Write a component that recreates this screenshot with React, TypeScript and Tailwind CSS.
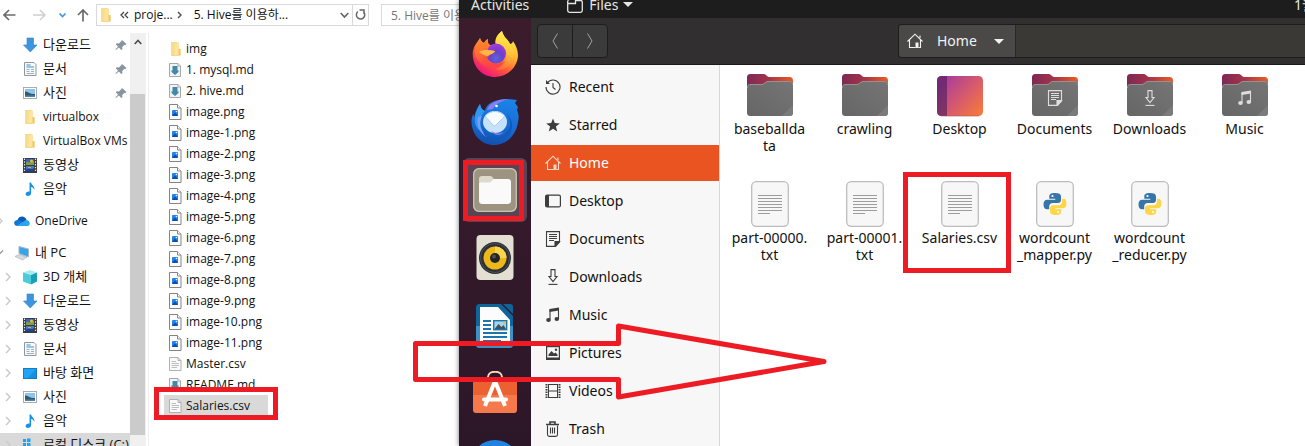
import React from "react";

/* ---------- Explorer icons ---------- */

function WinFolder() {
  return (
    <svg width="16" height="16" viewBox="0 0 16 16">
      <path d="M3 1h6l1.500 1.500V15H4L3 14z" fill="#f3cf73" />
      <path d="M3 1h4v13.500L3 14z" fill="#f9dd8e" />
      <path d="M7 1.500h4V8h1.500v6.500H6.500z" fill="#fbe3a0" />
      <path d="M10.500 8h2v6.500h-2z" fill="#eec763" />
    </svg>
  );
}

function DownArrow() {
  return (
    <svg width="16" height="16" viewBox="0 0 16 16">
      <path d="M5 1h6.500v7H15l-6.700 7L1.500 8H5z" fill="#3f93df" stroke="#2b7fcc" strokeWidth=".6" />
    </svg>
  );
}

function DocIcon() {
  return (
    <svg width="16" height="16" viewBox="0 0 16 16">
      <path d="M2.500 1.500h9.500l2 2v11H2.500z" fill="#f7f9fa" stroke="#8d979d" />
      <path d="M4.500 4h4M4.500 6h7.500" stroke="#3f8fd0" strokeWidth="1.200" />
      <path d="M4.500 8.500h3M4.500 10.500h3M4.500 12.500h7.500M9 8.500h3M9 10.500h3" stroke="#9bb2c2" />
    </svg>
  );
}

function PhotoIcon() {
  return (
    <svg width="16" height="16" viewBox="0 0 16 16">
      <rect x="1.500" y="2.500" width="13" height="11" fill="#fff" stroke="#a9adb1" />
      <rect x="3" y="4" width="10" height="8" fill="#8ec5ee" />
      <path d="M3 6.500c3 0 5 3 10 2.500v3H3z" fill="#33586a" />
      <path d="M3 10.500h10V12H3z" fill="#4f86a8" />
    </svg>
  );
}

function FilmIcon() {
  return (
    <svg width="16" height="16" viewBox="0 0 16 16">
      <rect x="1" y="1" width="14" height="15" fill="#3a3a3c" />
      <path d="M2.500 1.500v14M13.500 1.500v14" stroke="#e9e9e9" strokeWidth="1.200" strokeDasharray="1.400 1.400" />
      <rect x="4" y="2" width="8" height="6" fill="#3f62c4" />
      <path d="M4 6c2-3 3 1 5-1l3-1v4H4z" fill="#79a63e" />
      <circle cx="9.500" cy="4" r="1.500" fill="#e7b63c" />
      <rect x="4" y="9" width="8" height="6" fill="#3d77d0" />
      <path d="M4 13c3-3 5 1 8-2v4H4z" fill="#283f7d" />
      <path d="M6 10.500h3" stroke="#e4a047" />
    </svg>
  );
}

function NoteIcon() {
  return (
    <svg width="16" height="16" viewBox="0 0 16 16">
      <path d="M7.500 1.500h1.600c.3 2.500 4 3.400 3.200 7.500-.6-1.800-1.600-2.700-3.200-3V12c0 1.700-1.400 3-3.100 3-1.400 0-2.400-.8-2.400-2 0-1.500 1.600-2.700 3.900-2.500z" fill="#1693e6" />
    </svg>
  );
}

function CloudIcon() {
  return (
    <svg width="16" height="16" viewBox="0 0 16 16">
      <path d="M3.500 7C5 2 11.500 2.500 12.500 7L9 11z" fill="#0a5cb4" />
      <path d="M4 13c-5 0-5-6-.5-6 2-.5 3.500.5 8 4z" fill="#1078d2" />
      <path d="M3 12.500 12 7c4.500 0 5 6 1 6H4z" fill="#2ba5ee" />
    </svg>
  );
}

function PcIcon() {
  return (
    <svg width="16" height="16" viewBox="0 0 16 16">
      <path d="m5 1.500 9.500 2.500v8L5 8.500z" fill="#36a4ea" stroke="#a9b7c1" />
      <path d="m1 11.500 4-2 8 2.500-4.500 3z" fill="#d5dade" stroke="#a8afb5" strokeWidth=".6" />
    </svg>
  );
}

function CubeIcon() {
  return (
    <svg width="16" height="16" viewBox="0 0 16 16">
      <path d="m8 1 7 2.500L9 6 1 3.500z" fill="#a7ecf1" />
      <path d="M1 3.500 9 6v9.500l-8-3z" fill="#4ccbd9" />
      <path d="m9 6 6-2.500v9l-6 3z" fill="#17a0b6" />
    </svg>
  );
}

function DesktopTile() {
  return (
    <svg width="16" height="16" viewBox="0 0 16 16">
      <rect x="1.500" y="3.500" width="13" height="10" fill="#22a4f4" stroke="#167bc4" />
      <path d="M14 4v9H6z" fill="#1390e2" />
    </svg>
  );
}

function DriveIcon() {
  return (
    <svg width="16" height="16" viewBox="0 0 16 16">
      <path d="M1 2h3v3H1zM5 1.500h3.500V5H5zM1 6h3v3H1zM5 6h3.500v3.500H5z" fill="#1fa6ea" />
      <path d="M3 10h12v4H3z" fill="#b9bec2" />
    </svg>
  );
}

function PinIcon() {
  return (
    <svg width="12" height="12" viewBox="0 0 12 12" aria-hidden="true">
      <path d="M7 1 11.500 5 10 6.200 9.200 6 7.200 8l.2 2.200-1 .8-2.700-2.600L1 11l-.5-.5L3 7.600.8 5.200l.9-.9 2.200.2L6 2.600z" fill="#8794a3" />
    </svg>
  );
}

function MdFile() {
  return (
    <svg width="14" height="16" viewBox="0 0 14 16">
      <path d="M1.500 1.500h8.500l2.500 2.500v10.500h-11z" fill="#f1f4f6" stroke="#a4a8ab" />
      <path d="M10 1.500v2.500h2.500" fill="#fff" stroke="#a4a8ab" />
      <path d="M4.500 4h5v4.500h1.500l-1 2-3 2.500-3-2.500-1-2h1.500z" fill="#4189a6" />
    </svg>
  );
}

function PngFile() {
  return (
    <svg width="14" height="16" viewBox="0 0 14 16">
      <path d="M1.500.5H9.500l3.500 3.500v11.500H1.500z" fill="#fbfbfb" stroke="#858585" />
      <path d="M9.500.5V4H13" fill="#fff" stroke="#858585" />
      <rect x="4" y="6" width="6" height="6" rx="1" fill="#2383e6" />
      <path d="m4 11.500 3-3L10 11.500l-.5.5h-5z" fill="#0b50b0" />
      <circle cx="8.500" cy="7.500" r=".8" fill="#e7f3ff" />
    </svg>
  );
}

function CsvFile() {
  return (
    <svg width="14" height="16" viewBox="0 0 14 16">
      <path d="M1.500 1.500H10l3 3v10H1.500z" fill="#fafafa" stroke="#b0b0b0" />
      <path d="M10 1.500v3h3" fill="none" stroke="#b0b0b0" />
      <path d="M3.500 5.500H8M3.500 7.500H11M3.500 9.500H11M3.500 11.500H9" stroke="#bdbdbd" />
    </svg>
  );
}

function Chevron({ open = false }: { open?: boolean }) {
  return (
    <svg width="8" height="10" viewBox="0 0 8 10" aria-hidden="true">
      {open ? (
        <path d="M0 5.500 2 7.500 7 2.500" fill="none" stroke="#9a9a9a" strokeWidth="1.300" />
      ) : (
        <path d="m2 1 4 4-4 4" fill="none" stroke="#cbcbcb" strokeWidth="1.500" />
      )}
    </svg>
  );
}

/* ---------- Dock icons ---------- */

function Firefox() {
  return (
    <svg width="46" height="46" viewBox="0 0 46 46">
      <defs>
        <linearGradient id="ffBody" x1=".8" y1=".1" x2=".25" y2=".95">
          <stop offset="0" stopColor="#ffe94b" />
          <stop offset=".35" stopColor="#ffb02e" />
          <stop offset=".65" stopColor="#ff5b36" />
          <stop offset="1" stopColor="#f0157e" />
        </linearGradient>
        <radialGradient id="ffGlobe" cx=".5" cy=".75" r=".7">
          <stop offset="0" stopColor="#5b63d8" />
          <stop offset=".5" stopColor="#6b3fcb" />
          <stop offset="1" stopColor="#a03bdc" />
        </radialGradient>
        <linearGradient id="ffHead" x1="0" y1="0" x2=".3" y2="1">
          <stop offset="0" stopColor="#ff8d2a" />
          <stop offset=".5" stopColor="#ff7030" />
          <stop offset="1" stopColor="#ff4048" />
        </linearGradient>
        <linearGradient id="ffFlame" x1=".5" y1="0" x2=".4" y2="1">
          <stop offset="0" stopColor="#fff04e" />
          <stop offset=".55" stopColor="#ffc53a" />
          <stop offset="1" stopColor="#ff6a3c" />
        </linearGradient>
      </defs>
      <path d="M8 7c1 3 2 4 4 5 1-2 2-3 4-4-.5 3 0 5 2 6l6 0C22 10 24 4 30 0c1 6 6 8 8 13 1 0 3-1 3-3 4 6 5 11 5 15-1 12-11 21-23 21S1 37 .7 23C.7 18 3 14 4 13c1-2 3-4 4-6z" fill="url(#ffBody)" />
      <path d="M30 0c-5 4-7 8-6 13 7 1 11 5 11 11 0 8-5 13-12 14 10 3 19-4 19-14 0-5-2-8-4-11-2-5-7-7-8-13z" fill="url(#ffFlame)" />
      <circle cx="24" cy="22.500" r="10" fill="url(#ffGlobe)" />
      <path d="M8 7c1 3 2 4 4 5 1-2 2-3 4-4-.5 3 0 5 2 6-1 1-2 3-2 5l7 1c-1 3-5 3-6 5-2 2-3 1-4 2 1 4 5 6 10 6 4 0 7-1 9-3-2 7-14 10-22 3C4 28 2 24 3 18c0-5 4-8 5-11z" fill="url(#ffHead)" fillOpacity=".9" />
      <path d="M7 21c4-3 10-2 16-1-1 3-5 3-7 5-3 0-6-2-9-4z" fill="#ffb648" />
    </svg>
  );
}

function Thunderbird() {
  return (
    <svg width="48" height="48" viewBox="0 0 48 48">
      <defs>
        <linearGradient id="tbBody" x1=".6" y1="0" x2=".4" y2="1">
          <stop offset="0" stopColor="#1b83e8" />
          <stop offset=".6" stopColor="#1769d0" />
          <stop offset="1" stopColor="#1150ae" />
        </linearGradient>
      </defs>
      <path d="M9 6c1 4 2 6 5 7 1-8 11-12 23-12l9 1-2 3 3 4-1 3c2 5 2 8 1 12-2 14-12 23-24 23C10 47 0 36 .5 22c.3-3 1-4 2-6 0 0 .5 2 1 3C4 14 6 10 9 6z" fill="url(#tbBody)" />
      <path d="M9 6c1 4 2 6 5 7-5 5-7 14-1 22C5 32 3 25 4 18c1-5 3-8 5-12z" fill="#2c9af2" />
      <path d="M16 12c2-7 11-11 21-11-8 3-13 5-15 10z" fill="#8a7df0" />
      <path d="M7 19c-2 7 1 15 8 20-7-9-7-14-4-21z" fill="#7e9cf3" />
      <path d="M36 16c5 8 4 16-3 21-6 4-11 2-15 0 3 5 11 6 17 2 8-5 8-16 1-23z" fill="#0f5abb" />
      <ellipse cx="24" cy="24" rx="12" ry="11" fill="#c5e1fc" />
      <path d="M14 18c6-6 14-6 20 0l-9 9c-1 1-2 1-3 0z" fill="#f6fbff" stroke="#9dc5ee" strokeWidth=".8" />
      <path d="M20 33c5 3 9 3 13 1-4 4-9 4-13-1z" fill="#8e7cea" />
      <circle cx="25.500" cy="8" r="1.300" fill="#fff" />
    </svg>
  );
}

function FilesApp() {
  return (
    <svg width="46" height="46" viewBox="0 0 46 46">
      <rect x="1" y="1" width="44" height="44" rx="6" fill="#9c9480" />
      <rect x="1.700" y="1.700" width="42.600" height="42.600" rx="5.500" fill="none" stroke="#c9c3b1" strokeWidth="1.300" />
      <path d="M7 12c0-2 1-3 3-3h8c2 0 2 1 4 3v6H7z" fill="#dedacb" />
      <path d="M7 17c0-1 1-1.500 2-1.500h9l4-3.500h14c2 0 3 1 3 3v18c0 3-1 4-4 4H11c-3 0-4-1-4-4z" fill="#fafafa" />
    </svg>
  );
}

function Rhythmbox() {
  return (
    <svg width="46" height="46" viewBox="0 0 46 46">
      <rect x="4.500" y="0" width="37" height="45" rx="4" fill="#e4dfd3" />
      <circle cx="23" cy="23" r="16" fill="#2c2f36" />
      <circle cx="23" cy="23" r="14.500" fill="none" stroke="#4c5059" />
      <circle cx="23" cy="23" r="11.500" fill="#edb81a" />
      <path d="M23 11.500a11.500 11.500 0 0 1 11.500 11.500L23 23z" fill="#f9d34b" />
      <circle cx="23" cy="23" r="5" fill="#22242a" />
      <circle cx="22" cy="21.500" r="2" fill="#4c4e55" />
    </svg>
  );
}

function Writer() {
  return (
    <svg width="46" height="46" viewBox="0 0 46 46">
      <path d="M8 1h21l12 12v28c0 3-1 4-4 4H8c-3 0-4-1-4-4V5c0-3 1-4 4-4z" fill="#0e6599" />
      <path d="M4 23h37v18c0 3-1 4-4 4H8c-3 0-4-1-4-4z" fill="#3d8fc4" />
      <path d="M31 1h7c2 0 3 1 3 3v7z" fill="#0e6599" />
      <path d="M8 4h18l12 13v25H8z" fill="#fcfcfc" />
      <path d="M11 18h8M11 22h8M11 26h8M11 30h24M11 34h24M11 38h18" stroke="#1d76ab" strokeWidth="2" />
      <rect x="21.700" y="17.700" width="13" height="9" fill="#a7d4f0" stroke="#1d76ab" strokeWidth="1.400" />
      <path d="m22.500 26 4-5 3 3 2-2 2.500 4z" fill="#43535d" />
      <circle cx="32.500" cy="20" r="1.500" fill="#f2bb3b" />
    </svg>
  );
}

function Software() {
  return (
    <svg width="46" height="46" viewBox="0 0 46 46">
      <path d="M16 8V6c0-7 14-7 14 0v2" fill="none" stroke="#f6d8be" strokeWidth="2" />
      <rect x="1" y="6" width="44" height="36" rx="4" fill="#ec6130" />
      <path d="M1 24h44v14c0 3-1 4-4 4H5c-3 0-4-1-4-4z" fill="#f5794b" />
      <path d="M23 10 13 35M23 10l10 25" stroke="#fff" strokeWidth="4" />
      <path d="M12 28.500h22" stroke="#fff" strokeWidth="4" strokeLinecap="round" />
    </svg>
  );
}

function Help() {
  return (
    <svg width="50" height="50" viewBox="0 0 50 50">
      <circle cx="25" cy="27" r="24" fill="#2183dd" />
      <path d="M25 14c5 0 9 3 9 8 0 6-7 6-7 11" fill="none" stroke="#fff" strokeWidth="4" />
    </svg>
  );
}

/* ---------- Symbolic icons, drawn in the current colour ---------- */

function Clock() {
  return (
    <svg width="16" height="16" viewBox="0 0 16 16" fill="none" stroke="currentColor" strokeWidth="1.100">
      <path d="M2.300 4A7 7 0 1 1 1 8" />
      <path d="M8 4v4.500l2.500 2" />
      <path d="M1 1v4h4z" fill="currentColor" stroke="none" />
    </svg>
  );
}

function Star() {
  return (
    <svg width="16" height="16" viewBox="0 0 16 16">
      <path d="m8 1.500 1.800 4.600 5 .3-3.900 3.100 1.300 4.900L8 11.700l-4.200 2.700 1.300-4.900-3.900-3.100 5-.3z" fill="currentColor" />
    </svg>
  );
}

function House() {
  return (
    <svg width="16" height="16" viewBox="0 0 16 16" fill="none" stroke="currentColor" strokeWidth="1.100">
      <path d="M.5 8.500 8 1.200l7.500 7.300" />
      <path d="M2.500 7v7.500h6M13.500 7v7.500h-2M13 5V2.500" />
      <path d="M8.500 15V9.500h3V15z" fill="currentColor" stroke="none" />
    </svg>
  );
}

function DeskIcon() {
  return (
    <svg width="16" height="16" viewBox="0 0 16 16">
      <rect x=".6" y="2.100" width="14.800" height="11.800" rx="1.500" fill="none" stroke="currentColor" strokeWidth="1.200" />
      <path d="M1 2h3v12H1z" fill="currentColor" />
    </svg>
  );
}

function Page() {
  return (
    <svg width="16" height="16" viewBox="0 0 16 16" fill="none" stroke="currentColor" strokeWidth="1.100">
      <path d="M1.500.6h13v10.400l-4 4.400h-9z" />
      <path d="M4 3.500h8M4 5.500h8M4 7.500h8M4 9.500h5" />
      <path d="M14.500 10.500h-4.500v5z" fill="currentColor" />
    </svg>
  );
}

function Download() {
  return (
    <svg width="16" height="16" viewBox="0 0 16 16" fill="none" stroke="currentColor" strokeWidth="1.100">
      <path d="M6 .6h4V7.500h2L8 12.500 4 7.500h2z" />
      <path d="M3.500 15.400h9" />
    </svg>
  );
}

function Notes() {
  return (
    <svg width="16" height="16" viewBox="0 0 16 16">
      <path d="M5 2.500v10M13.500 1v11" stroke="currentColor" strokeWidth="1.100" />
      <path d="M4.500 2 14 .5v3L4.500 5z" fill="currentColor" />
      <ellipse cx="3.500" cy="13" rx="2.300" ry="2" fill="currentColor" />
      <ellipse cx="11.800" cy="12" rx="2.300" ry="2" fill="currentColor" />
    </svg>
  );
}

function Picture() {
  return (
    <svg width="16" height="16" viewBox="0 0 16 16">
      <rect x="1.600" y="1.600" width="12.800" height="12.800" fill="none" stroke="currentColor" strokeWidth="1.200" />
      <path d="M1.500 12.500h13v2h-13zM3.500 11V9.500L6.500 6l2.500 2.500L10.500 7.500 12.500 9.500V11z" fill="currentColor" />
      <circle cx="11" cy="4.700" r="1.200" fill="currentColor" />
    </svg>
  );
}

function Film() {
  return (
    <svg width="16" height="16" viewBox="0 0 16 16" fill="none" stroke="currentColor">
      <path d="M1.500 1v14M14.500 1v14" strokeWidth="2" strokeDasharray="1.500 1" />
      <path d="M3.500 1v14M12.500 1v14M3 1.500h10M3 8h10M3 14.500h10" />
    </svg>
  );
}

function Trash() {
  return (
    <svg width="16" height="16" viewBox="0 0 16 16" fill="none" stroke="currentColor" strokeWidth="1.100">
      <path d="M2.500 4.500v9c0 1.200.5 1.900 1.700 1.900h6.600c1.200 0 1.700-.7 1.700-1.900v-9M5.500 6.500v6M7.500 6.500v6M9.500 6.500v6" />
      <path d="M1 3.500h13M5 3V1h5v2" strokeWidth="1.600" />
    </svg>
  );
}

/* ---------- File grid icons ---------- */

function FolderIcon({ children }: { children?: React.ReactNode }) {
  return (
    <span className="relative block size-12">
      <svg width="48" height="48" viewBox="0 0 48 48">
        <defs>
          <linearGradient id="folderBack" x1="0" y1="0" x2="1" y2="0">
            <stop offset="0" stopColor="#7d2955" />
            <stop offset=".45" stopColor="#a3324a" />
            <stop offset="1" stopColor="#ee5a24" />
          </linearGradient>
          <linearGradient id="folderFront" x1="0" y1="1" x2="1" y2="0">
            <stop offset="0" stopColor="#666" />
            <stop offset="1" stopColor="#757575" />
          </linearGradient>
        </defs>
        <path d="M1 8c0-3 1-4 4-4h13c2 0 3 3 5 3h20c3 0 4 1 4 4v11H1z" fill="url(#folderBack)" />
        <path d="M1 18c0-3 1-4 4-4h11c3 0 3-3 6-3h21c3 0 4 1 4 4v27c0 3-1 4-4 4H5c-3 0-4-1-4-4z" fill="url(#folderFront)" />
        <path d="M1.500 18c0-2.500 1-3.500 3.500-3.500h11c3 0 3-3 6-3h21c2.500 0 3.500 1 3.500 3.500" fill="none" stroke="#929292" />
        <path d="m36 46 11-11v7c0 3-1 4-4 4z" fill="#7b7b7b" />
      </svg>
      {children && (
        <span className="absolute inset-x-0 top-5 flex justify-center text-[#dedede]">{children}</span>
      )}
    </span>
  );
}

function DesktopFolder() {
  return (
    <svg width="48" height="48" viewBox="0 0 48 48">
      <defs>
        <linearGradient id="deskFill" x1="0" y1=".1" x2="1" y2=".9">
          <stop offset=".1" stopColor="#ab3e99" />
          <stop offset=".55" stopColor="#d65a6c" />
          <stop offset="1" stopColor="#f8793c" />
        </linearGradient>
      </defs>
      <rect x="1" y="6" width="46" height="40" rx="4.500" fill="url(#deskFill)" />
      <path d="M5.500 6H11v40H5.500C2.500 46 1 44.500 1 41.500v-31C1 7.500 2.500 6 5.500 6z" fill="#4e1f5c" fillOpacity=".62" />
      <path d="M5 46h38" stroke="#a9535a" strokeOpacity=".6" />
    </svg>
  );
}

function TextFile() {
  return (
    <svg width="48" height="48" viewBox="0 0 48 48">
      <rect x="5.700" y="2.700" width="36.600" height="44.600" rx="4.500" fill="#f7f7f7" stroke="#bdbdbd" strokeWidth="1.300" />
      <path d="M12 16.500h24M12 19.500h24M12 22.500h24M12 25.500h24M12 28.500h24M12 31.500h24M12 34.500h12" stroke="#9c9c9c" />
    </svg>
  );
}

function PythonFile() {
  return (
    <svg width="48" height="48" viewBox="0 0 48 48">
      <rect x="5.700" y="2.700" width="36.600" height="44.600" rx="4.500" fill="#f7f7f7" stroke="#bdbdbd" strokeWidth="1.300" />
      <path d="M24 14c-4.500 0-5.700 1.500-5.700 3.500v2.300h6v1h-8c-2.500 0-3.800 2-3.800 4.700s1.300 4.800 3.500 4.800h2.200v-3c0-2 1.500-3.300 3.500-3.300h5.300c1.800 0 3-1.200 3-3v-3.500C30 15 28 14 24 14z" fill="#3775a9" />
      <path d="M24.500 36c4.500 0 5.700-1.500 5.700-3.500v-2.300h-6v-1h8c2.300 0 3.300-2 3.300-4.700s-1-4.800-3-4.800H31v3c0 2-1.500 3.600-3.500 3.600h-5.300c-2 0-3.200 1.200-3.200 3v3.500c0 2 2 3.200 5.500 3.200z" fill="#ffd648" />
      <circle cx="21.500" cy="17" r="1.100" fill="#fff" />
      <circle cx="27" cy="33" r="1.100" fill="#fff" />
    </svg>
  );
}

/* ---------- Data ---------- */

type NavItem = {
  label: string;
  icon: React.ReactNode;
  pinned?: boolean;
  top?: boolean;
  expander?: "open" | "closed";
  selected?: boolean;
};

const quickAccess: NavItem[] = [
  { label: "다운로드", icon: <DownArrow />, pinned: true },
  { label: "문서", icon: <DocIcon />, pinned: true },
  { label: "사진", icon: <PhotoIcon />, pinned: true },
  { label: "virtualbox", icon: <WinFolder /> },
  { label: "VirtualBox VMs", icon: <WinFolder /> },
  { label: "동영상", icon: <FilmIcon /> },
  { label: "음악", icon: <NoteIcon /> },
];

const oneDrive: NavItem[] = [{ label: "OneDrive", icon: <CloudIcon />, top: true, expander: "closed" }];

const thisPc: NavItem[] = [
  { label: "내 PC", icon: <PcIcon />, top: true, expander: "open" },
  { label: "3D 개체", icon: <CubeIcon />, expander: "closed" },
  { label: "다운로드", icon: <DownArrow />, expander: "closed" },
  { label: "동영상", icon: <FilmIcon />, expander: "closed" },
  { label: "문서", icon: <DocIcon />, expander: "closed" },
  { label: "바탕 화면", icon: <DesktopTile />, expander: "closed" },
  { label: "사진", icon: <PhotoIcon />, expander: "closed" },
  { label: "음악", icon: <NoteIcon />, expander: "closed" },
  { label: "로컬 디스크 (C:)", icon: <DriveIcon />, expander: "closed", selected: true },
];

const explorerFiles = [
  "img",
  "1. mysql.md",
  "2. hive.md",
  "image.png",
  "image-1.png",
  "image-2.png",
  "image-3.png",
  "image-4.png",
  "image-5.png",
  "image-6.png",
  "image-7.png",
  "image-8.png",
  "image-9.png",
  "image-10.png",
  "image-11.png",
  "Master.csv",
  "README.md",
  "Salaries.csv",
];

const places = [
  { label: "Recent", icon: <Clock /> },
  { label: "Starred", icon: <Star /> },
  { label: "Home", icon: <House /> },
  { label: "Desktop", icon: <DeskIcon /> },
  { label: "Documents", icon: <Page /> },
  { label: "Downloads", icon: <Download /> },
  { label: "Music", icon: <Notes /> },
  { label: "Pictures", icon: <Picture /> },
  { label: "Videos", icon: <Film /> },
  { label: "Trash", icon: <Trash /> },
];

const homeItems: { lines: string[]; icon: React.ReactNode; marked?: boolean }[] = [
  { lines: ["baseballda", "ta"], icon: <FolderIcon /> },
  { lines: ["crawling"], icon: <FolderIcon /> },
  { lines: ["Desktop"], icon: <DesktopFolder /> },
  { lines: ["Documents"], icon: <FolderIcon><Page /></FolderIcon> },
  { lines: ["Downloads"], icon: <FolderIcon><Download /></FolderIcon> },
  { lines: ["Music"], icon: <FolderIcon><Notes /></FolderIcon> },
  { lines: ["part-00000.", "txt"], icon: <TextFile /> },
  { lines: ["part-00001.", "txt"], icon: <TextFile /> },
  { lines: ["Salaries.csv"], icon: <TextFile />, marked: true },
  { lines: ["wordcount", "_mapper.py"], icon: <PythonFile /> },
  { lines: ["wordcount", "_reducer.py"], icon: <PythonFile /> },
];

const dockApps = [
  { name: "Firefox", icon: <Firefox /> },
  { name: "Thunderbird", icon: <Thunderbird /> },
  { name: "Files", icon: <FilesApp />, active: true },
  { name: "Rhythmbox", icon: <Rhythmbox /> },
  { name: "Writer", icon: <Writer /> },
  { name: "Software", icon: <Software /> },
  { name: "Help", icon: <Help /> },
];

/* ---------- Explorer ---------- */

const hangul = /[\uac00-\ud7a3]/;

function NavRow({ item }: { item: NavItem }) {
  return (
    <button
      className={`flex h-6 w-full shrink-0 items-center text-left whitespace-nowrap ${item.top ? "" : "pl-1"} ${item.selected ? "bg-[#d9d9d9]" : ""}`}
    >
      <span className={`flex w-[18px] shrink-0 ${item.top ? "-ml-1" : ""}`}>
        {item.expander && <Chevron open={item.expander === "open"} />}
      </span>
      <span className="mr-[5px] shrink-0">{item.icon}</span>
      <span className={hangul.test(item.label) ? "text-[13px]" : "text-xs"}>{item.label}</span>
      {item.pinned && (
        <span className="mr-[3px] ml-auto">
          <PinIcon />
        </span>
      )}
    </button>
  );
}

function fileIcon(name: string) {
  if (name.endsWith(".md")) return <MdFile />;
  if (name.endsWith(".png")) return <PngFile />;
  if (name.endsWith(".csv")) return <CsvFile />;
  return <WinFolder />;
}

function Explorer() {
  return (
    <section className="flex w-[459px] shrink-0 flex-col overflow-hidden bg-white font-['Open_Sans','Noto_Sans_CJK_KR',sans-serif] text-xs text-[#111]">
      <header className="flex h-[33px] shrink-0 items-start pt-1">
        <div className="flex h-[22px] w-24 shrink-0 items-center">
          <button aria-label="Back" className="ml-[3px]">
            <svg width="13" height="12" viewBox="0 0 13 12" fill="none" stroke="#6b6b6b" strokeWidth="1.700"><path d="M12.500 6H1M6 1 1 6l5 5" /></svg>
          </button>
          <button aria-label="Forward" className="ml-[17px]">
            <svg width="13" height="12" viewBox="0 0 13 12" fill="none" stroke="#cfcfcf" strokeWidth="1.500"><path d="M0 6h12M7 1l5 5-5 5" /></svg>
          </button>
          <button aria-label="Recent locations" className="ml-[13px]">
            <svg width="7" height="5" viewBox="0 0 7 5" fill="none" stroke="#4a9ae8" strokeWidth="1.700"><path d="m.5.500 3 3 3-3" /></svg>
          </button>
          <button aria-label="Up" className="ml-[11px]">
            <svg width="12" height="13" viewBox="0 0 12 13" fill="none" stroke="#6b6b6b" strokeWidth="1.700"><path d="M6 12.500V1M1 6l5-5 5 5" /></svg>
          </button>
        </div>
        <div className="flex h-[22px] w-[273px] shrink-0 items-center border border-[#d9d9d9] whitespace-nowrap">
          <span className="ml-px shrink-0"><WinFolder /></span>
          <svg className="ml-[6px] shrink-0" width="9" height="8" viewBox="0 0 9 8" fill="none" stroke="#444" strokeWidth="1.300"><path d="M4 1 1 4l3 3M8 1 5 4l3 3" /></svg>
          <button className="ml-[5px]">proje...</button>
          <svg className="ml-1 shrink-0" width="5" height="8" viewBox="0 0 5 8" fill="none" stroke="#555" strokeWidth="1.500"><path d="m1 1 3 3-3 3" /></svg>
          <button className="ml-3">5. Hive를 이용하...</button>
          <button aria-label="Previous locations" className="mr-[3px] ml-auto shrink-0">
            <svg width="9" height="7" viewBox="0 0 9 7" fill="none" stroke="#666" strokeWidth="1.700"><path d="m.7 1 3.800 4L8.300 1" /></svg>
          </button>
          <button aria-label="Refresh" className="flex h-full w-4 shrink-0 items-center justify-center border-l border-[#d9d9d9]">
            <svg width="11" height="12" viewBox="0 0 11 12" fill="none" stroke="#666" strokeWidth="1.500"><path d="M3 2.500a4.200 4.200 0 1 0 5.500.3M4.500 1h4.500v4" /></svg>
          </button>
        </div>
        <input
          aria-label="Search"
          placeholder="5. Hive를 이용하"
          className="ml-3 h-[22px] w-24 shrink-0 border border-[#d9d9d9] pl-[9px] text-xs placeholder:text-[#777]"
        />
      </header>
      <div className="flex min-h-0 flex-1">
        <nav className="flex w-[130px] shrink-0 flex-col gap-2 overflow-hidden">
          <div>{quickAccess.map((i) => <NavRow key={i.label} item={i} />)}</div>
          <div>{oneDrive.map((i) => <NavRow key={i.label} item={i} />)}</div>
          <div>{thisPc.map((i) => <NavRow key={i.label} item={i} />)}</div>
        </nav>
        <div className="flex w-4 shrink-0 flex-col bg-[#f0f0f0]">
          <div className="flex h-[61px] shrink-0 justify-center pt-[6px]">
            <svg width="8" height="6" viewBox="0 0 8 6" fill="none" stroke="#505050" strokeWidth="1.700"><path d="m.7 5 3.300-3.500L7.300 5" /></svg>
          </div>
          <div className="mb-[11px] w-[15px] flex-1 bg-[#cbcbcb]" />
        </div>
        <div className="ml-[2px] w-px shrink-0 bg-[#ededed]" />
        <ul className="flex min-w-0 flex-1 flex-col overflow-hidden pt-[5px] pl-[15px]">
          {explorerFiles.map((name) => {
            const marked = name === "Salaries.csv";
            return (
              <li key={name} className="relative h-[21px] w-[104px] shrink-0">
                <button className={`flex h-full w-full items-center text-left whitespace-nowrap ${marked ? "bg-[#d9d9d9]" : ""}`}>
                  <span className="ml-1 flex w-[18px] shrink-0">{fileIcon(name)}</span>
                  {name}
                </button>
                {marked && <span className="absolute -inset-x-[10px] -top-2 -bottom-1 border-5 border-[#ed1c24]" />}
              </li>
            );
          })}
        </ul>
      </div>
    </section>
  );
}

/* ---------- Ubuntu desktop ---------- */

function Ubuntu() {
  return (
    <section className="z-10 flex min-w-0 flex-1 flex-col overflow-hidden bg-white font-['Noto_Sans','Noto_Sans_CJK_KR',sans-serif] text-sm text-[#111] shadow-[0_0_5px_rgba(0,0,0,0.55)]">
      <div className="-mt-[9px] flex h-[27px] shrink-0 items-center bg-[#1d1d1d] text-[#e6e6e6]">
        <button className="ml-3">Activities</button>
        <button className="ml-[38px] flex items-center">
          <svg className="mr-[6px]" width="16" height="16" viewBox="0 0 16 16" fill="none" stroke="#e6e6e6" strokeWidth="1.300"><path d="M.7 3.500v10c0 1.200.5 1.800 1.800 1.800h11c1.200 0 1.800-.6 1.800-1.800V5c0-1-.5-1.500-1.500-1.500H8.500V6.500H1M8.500 3.500V1h-7v2.500" /></svg>
          Files
          <svg className="ml-[5px]" width="10" height="5" viewBox="0 0 10 5"><path d="M0 0h10L5 5z" fill="#e6e6e6" /></svg>
        </button>
        <span className="ml-auto w-[11px] overflow-hidden whitespace-nowrap">1월</span>
      </div>
      <div className="flex min-h-0 flex-1">
        <nav className="flex w-[72px] shrink-0 flex-col items-center gap-1 overflow-hidden bg-linear-to-b from-[#3b1c2c] to-[#2c1729] pt-1">
          {dockApps.map((app) => (
            <button
              key={app.name}
              aria-label={app.name}
              className={`relative flex size-16 shrink-0 items-center justify-center rounded-md ${app.active ? "bg-[#5a4353]" : ""}`}
            >
              {app.icon}
              {app.active && <span className="absolute top-[2px] right-[3px] bottom-px left-0 border-5 border-[#ed1c24]" />}
            </button>
          ))}
        </nav>
        <div className="flex min-w-0 flex-1 flex-col">
          <header className="flex h-[47px] shrink-0 items-center border-b border-[#1b1a1a] bg-[#312f2f] pl-[6px]">
            <div className="flex h-[34px] w-[71px] shrink-0 rounded border border-[#1d1d1d] bg-[#3b3b3b]">
              <button aria-label="Back" className="flex flex-1 items-center justify-center border-r border-[#1d1d1d]">
                <svg width="6" height="16" viewBox="0 0 6 16" fill="none" stroke="#a2a2a2"><path d="M5.500.500 1 8l4.500 7.500" /></svg>
              </button>
              <button aria-label="Forward" className="flex flex-1 items-center justify-center">
                <svg width="6" height="16" viewBox="0 0 6 16" fill="none" stroke="#a2a2a2"><path d="M.5.500 5 8 .5 15.500" /></svg>
              </button>
            </div>
            <div className="ml-[290px] flex h-[34px] flex-1 overflow-hidden rounded-l border border-r-0 border-[#1d1d1d] bg-[#3a3936]">
              <button className="flex items-center border-r border-[#2a2929] bg-[#4a4947] pr-[11px] pl-2 text-[#f2f2f2]">
                <House />
                <span className="ml-[14px]">Home</span>
                <svg className="ml-[17px]" width="10" height="5" viewBox="0 0 10 5"><path d="M0 0h10L5 5z" fill="#f2f2f2" /></svg>
              </button>
            </div>
          </header>
          <div className="flex min-h-0 flex-1">
            <nav className="flex w-[189px] shrink-0 flex-col gap-[2px] overflow-hidden border-r border-[#d8d8d8] bg-[#f7f7f7] pt-1">
              {places.map((p) => {
                const on = p.label === "Home";
                return (
                  <button
                    key={p.label}
                    className={`flex h-9 shrink-0 items-center gap-2 pl-[14px] ${on ? "bg-[#e95420] text-white" : ""}`}
                  >
                    <span className={on ? "text-[#fbd5c6]" : "text-[#3d3d3d]"}>{p.icon}</span>
                    {p.label}
                  </button>
                );
              })}
            </nav>
            <main className="grid min-w-0 flex-1 grid-cols-[repeat(auto-fill,95px)] content-start gap-y-[25px] overflow-hidden bg-white pt-[5px] pl-[2px]">
              {homeItems.map((item) => (
                <button key={item.lines.join("")} className="relative flex h-[84px] flex-col items-center whitespace-nowrap">
                  <span className="mb-[2px]">{item.icon}</span>
                  {item.lines.map((line) => (
                    <span key={line} className="leading-[17px]">{line}</span>
                  ))}
                  {item.marked && <span className="absolute -top-[7px] -right-1 -bottom-[10px] -left-[9px] border-5 border-[#ed1c24]" />}
                </button>
              ))}
            </main>
          </div>
        </div>
      </div>
    </section>
  );
}

export default function App() {
  return (
    <div className="relative flex h-screen overflow-hidden bg-white">
      <Explorer />
      <Ubuntu />
      <svg
        className="pointer-events-none absolute top-[320px] left-[410px] z-20"
        width="420"
        height="84"
        viewBox="0 0 420 84"
        fill="none"
        stroke="#ed1c24"
        strokeWidth="5"
        strokeLinejoin="round"
        aria-hidden="true"
      >
        <path d="M5.500 23.500H208.500V6L414 41.500 208.500 77V59.500H5.500z" />
      </svg>
    </div>
  );
}
